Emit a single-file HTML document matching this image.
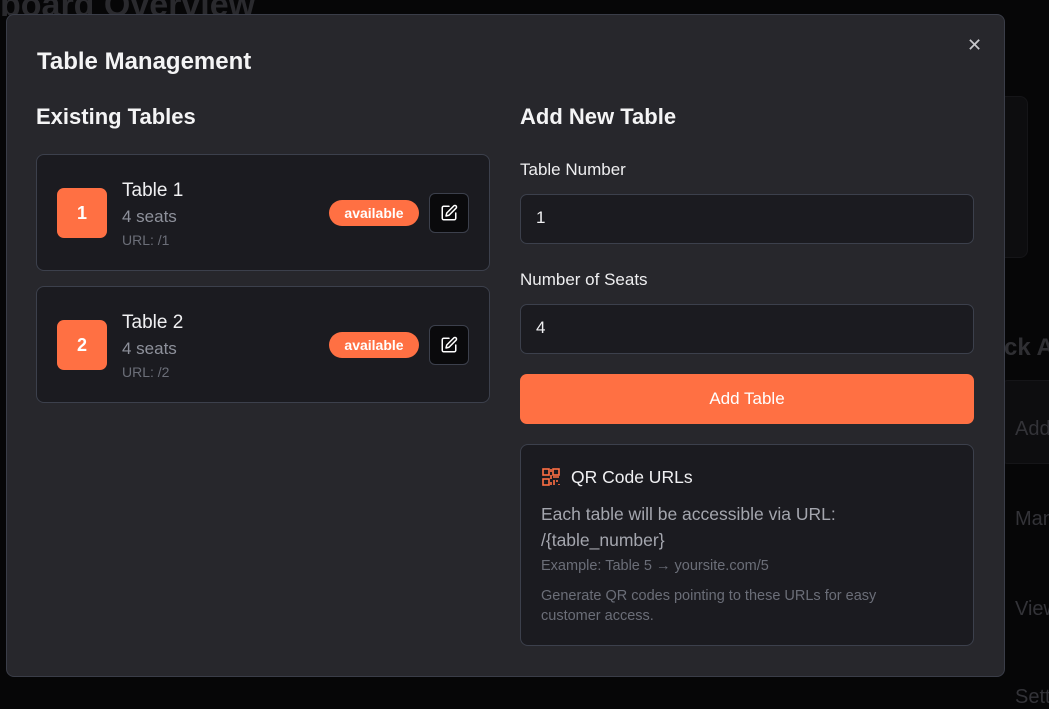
<!DOCTYPE html>
<html><head><meta charset="utf-8"><style>
*{box-sizing:border-box;margin:0;padding:0}
body{width:1049px;height:698px;background:#060607;font-family:"Liberation Sans",sans-serif;position:relative;overflow:hidden;color:#fff}
.bgt{position:absolute;color:#2a2a2e;font-weight:bold;font-size:24px;white-space:nowrap}
.bgc{position:absolute;background:#0d0d0f;border:1px solid #151518;border-radius:8px}
.modal{position:absolute;left:6px;top:14px;width:999px;height:663px;background:#27272c;border:1px solid #3a3d48;border-radius:8px}
h2{position:absolute;left:30px;top:33px;font-size:24px;font-weight:bold;color:#f4f4f5}
h3{position:absolute;font-size:22px;font-weight:bold;color:#f4f4f5}
.close{position:absolute;left:960px;top:20px;font-size:18px;color:#c8c8cc}
.card{position:absolute;left:29px;width:454px;height:117px;background:#1b1b20;border:1px solid #3c404c;border-radius:8px}
.num{position:absolute;left:20px;top:33px;width:50px;height:50px;background:#ff7043;border-radius:7px;font-weight:bold;font-size:18px;display:flex;align-items:center;justify-content:center}
.t1{position:absolute;left:85px;top:25px;font-size:19px;color:#f0f0f2}
.t2{position:absolute;left:85px;top:52px;font-size:17px;color:#8e919b}
.t3{position:absolute;left:85px;top:77px;font-size:14px;color:#6b6e78}
.badge{position:absolute;left:292px;top:45px;width:90px;height:26px;background:#ff7043;border-radius:13px;font-weight:bold;font-size:14px;display:flex;align-items:center;justify-content:center}
.edit{position:absolute;left:392px;top:38px;width:40px;height:40px;background:#0a0a0c;border:1px solid #3c404c;border-radius:6px;display:flex;align-items:center;justify-content:center}
.lbl{position:absolute;left:513px;font-size:17px;color:#eeeef0}
.inp{position:absolute;left:513px;width:454px;height:50px;background:#1b1b20;border:1px solid #3c404c;border-radius:7px;font-size:17px;padding:13px 0 0 15px;color:#f0f0f2}
.btn{position:absolute;left:513px;top:359px;width:454px;height:50px;background:#ff7043;border-radius:7px;font-size:17px;display:flex;align-items:center;justify-content:center}
.qr{position:absolute;left:513px;top:429px;width:454px;height:202px;background:#1b1b20;border:1px solid #3c404c;border-radius:8px}
</style></head><body>
<div class="bgt" style="left:0;top:-14px;font-size:34px">board Overview</div>
<div class="bgc" style="left:990px;top:96px;width:38px;height:162px"></div>
<div class="bgt" style="left:1004px;top:334px;color:#2f2f33">ck A</div>
<div class="bgc" style="left:1000px;top:380px;width:60px;height:84px"></div>
<div class="bgt" style="left:1015px;top:418px;font-weight:normal;font-size:20px;color:#333338">Add</div>
<div class="bgt" style="left:1015px;top:508px;font-weight:normal;font-size:20px;color:#333338">Man</div>
<div class="bgt" style="left:1015px;top:598px;font-weight:normal;font-size:20px;color:#333338">View</div>
<div class="bgt" style="left:1015px;top:686px;font-weight:normal;font-size:20px;color:#333338">Sett</div>
<div class="modal">
<h2>Table Management</h2>
<div class="close">✕</div>
<h3 style="left:29px;top:89px">Existing Tables</h3>
<h3 style="left:513px;top:89px">Add New Table</h3>
<div class="card" style="top:139px"><div class="num">1</div><div class="t1">Table 1</div><div class="t2">4 seats</div><div class="t3">URL: /1</div><div class="badge">available</div>
<div class="edit"><svg width="18" height="18" viewBox="0 0 24 24" fill="none" stroke="#fff" stroke-width="2" stroke-linecap="round" stroke-linejoin="round"><path d="M12 3H5a2 2 0 0 0-2 2v14a2 2 0 0 0 2 2h14a2 2 0 0 0 2-2v-7"/><path d="M18.4 2.6a2.1 2.1 0 0 1 3 3L12 15l-4 1 1-4z"/></svg></div></div>
<div class="card" style="top:271px"><div class="num">2</div><div class="t1">Table 2</div><div class="t2">4 seats</div><div class="t3">URL: /2</div><div class="badge">available</div>
<div class="edit"><svg width="18" height="18" viewBox="0 0 24 24" fill="none" stroke="#fff" stroke-width="2" stroke-linecap="round" stroke-linejoin="round"><path d="M12 3H5a2 2 0 0 0-2 2v14a2 2 0 0 0 2 2h14a2 2 0 0 0 2-2v-7"/><path d="M18.4 2.6a2.1 2.1 0 0 1 3 3L12 15l-4 1 1-4z"/></svg></div></div>
<div class="lbl" style="top:145px">Table Number</div>
<div class="inp" style="top:179px">1</div>
<div class="lbl" style="top:255px">Number of Seats</div>
<div class="inp" style="top:289px">4</div>
<div class="btn">Add Table</div>
<div class="qr">
<svg style="position:absolute;left:21px;top:23px" width="18" height="18" viewBox="0 0 18 18" fill="none" stroke="#ff7043" stroke-width="1.6"><rect x="1" y="1" width="6" height="6"/><rect x="11" y="1" width="6" height="6"/><rect x="1" y="11" width="6" height="6"/><path d="M9 1v3M9 7v4M11 9h6M12 12v5M15 12v2M17 16v1M9 14v3"/></svg>
<div style="position:absolute;top:22px;left:50px;font-size:17.5px;color:#f0f0f2">QR Code URLs</div>
<div style="position:absolute;left:20px;top:56px;font-size:17.5px;line-height:26px;color:#a4a6ae;width:430px">Each table will be accessible via URL:<br>/{table_number}</div>
<div style="position:absolute;left:20px;top:113px;font-size:14.5px;color:#6b6e78">Example: Table 5 → yoursite.com/5</div>
<div style="position:absolute;left:20px;top:141px;font-size:14.5px;line-height:20px;color:#6b6e78;width:390px">Generate QR codes pointing to these URLs for easy customer access.</div>
</div>
</div>
</body></html>
